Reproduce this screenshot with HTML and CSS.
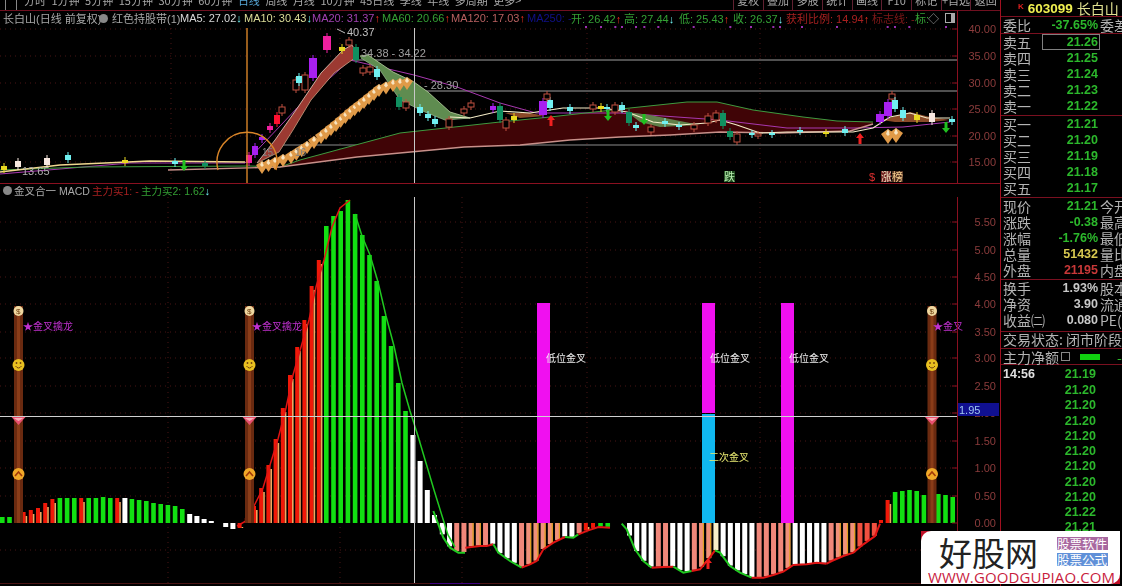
FILE: index.html
```html
<!DOCTYPE html>
<html>
<head>
    <title>长白山 日线</title>
    <link rel="stylesheet" href="styles.css">
</head>
<body>
    <div class="app">
        <div class="chart-col">
            <div class="toolbar">
                <div class="tabs">
                    <span class="tab-icon"></span>
                    <span>分时</span><span>1分钟</span><span>5分钟</span><span>15分钟</span><span>30分钟</span><span>60分钟</span>
                    <span class="active">日线</span><span>周线</span><span>月线</span><span>10分钟</span><span>45日线</span><span>季线</span><span>年线</span><span>多周期</span><span>更多&gt;</span>
                </div>
                <div class="tools">
                    <span>复权</span><span>叠加</span><span>多股</span><span>统计</span><span>画线</span><span>F10</span><span>标记</span><span>+自选</span><span>返回</span>
                </div>
            </div>
            <div class="info-row">
                <span class="c-gray w91">长白山(日线 前复权)</span>
                <span class="dot"></span>
                <span class="c-gray w68">红色持股带(1)</span>
                <span class="c-white w64">MA5: 27.02<i class="c-cyan">↓</i></span>
                <span class="c-yellow w68">MA10: 30.43<i class="c-cyan">↓</i></span>
                <span class="c-purple w70">MA20: 31.37<i class="c-red">↑</i></span>
                <span class="c-green w69">MA60: 20.66<i class="c-red">↑</i></span>
                <span class="c-rose w76">MA120: 17.03<i class="c-red">↑</i></span>
                <span class="c-navy w44">MA250: -</span>
                <span class="c-green w53">开: 26.42<i class="c-red">↑</i></span>
                <span class="c-green w55">高: 27.44<i class="c-cyan">↓</i></span>
                <span class="c-green w54">低: 25.43<i class="c-red">↑</i></span>
                <span class="c-green w53">收: 26.37<i class="c-cyan">↓</i></span>
                <span class="c-darkred w86">获利比例: 14.94<i class="c-red">↑</i></span>
                <span class="c-maroon w43">标志线: -</span>
                <span class="c-green w13">标:</span><span class="c-gray w17">◇</span>
                <span class="mini-box"></span>
            </div>
            <svg id="main-chart" class="main-chart" width="1000" height="155"></svg>
            <div class="sub-row">
                <span class="dot"></span>
                <span class="c-gray w78">金叉合一 MACD</span>
                <span class="c-darkred w49">主力买1: -</span>
                <span class="c-green">主力买2: 1.62<i class="c-cyan">↓</i></span>
            </div>
            <svg id="sub-chart" class="sub-chart" width="1000" height="389"></svg>
        </div>

        <div class="panel">
            <div class="stock-head"><b class="k-tag">K</b><b class="code">603099</b><span class="name">长白山</span></div>
            <div class="sec sec-ratio"><div class="row"><span>委比</span><b class="v up">-37.65%</b><span>委差</span></div></div>
            <div class="sec sec-book">
                <div class="row"><span>卖五</span><b class="v up boxed">21.26</b></div>
                <div class="row"><span>卖四</span><b class="v up">21.25</b></div>
                <div class="row"><span>卖三</span><b class="v up">21.24</b></div>
                <div class="row"><span>卖二</span><b class="v up">21.23</b></div>
                <div class="row"><span>卖一</span><b class="v up">21.22</b></div>
            </div>
            <div class="sec sec-book">
                <div class="row"><span>买一</span><b class="v up">21.21</b></div>
                <div class="row"><span>买二</span><b class="v up">21.20</b></div>
                <div class="row"><span>买三</span><b class="v up">21.19</b></div>
                <div class="row"><span>买四</span><b class="v up">21.18</b></div>
                <div class="row"><span>买五</span><b class="v up">21.17</b></div>
            </div>
            <div class="sec sec-book">
                <div class="row"><span>现价</span><b class="v up">21.21</b><span>今开</span></div>
                <div class="row"><span>涨跌</span><b class="v up">-0.38</b><span>最高</span></div>
                <div class="row"><span>涨幅</span><b class="v up">-1.76%</b><span>最低</span></div>
                <div class="row"><span>总量</span><b class="v gold">51432</b><span>量比</span></div>
                <div class="row"><span>外盘</span><b class="v rust">21195</b><span>内盘</span></div>
            </div>
            <div class="sec sec-stats">
                <div class="row"><span>换手</span><b class="v pale">1.93%</b><span>股本</span></div>
                <div class="row"><span>净资</span><b class="v pale">3.90</b><span>流通</span></div>
                <div class="row"><span>收益㈡</span><b class="v pale">0.080</b><span>PE(静)</span></div>
            </div>
            <div class="sec sec-status">交易状态: 闭市阶段</div>
            <div class="sec sec-flow">
                <span>主力净额</span><span class="flow-icon"></span><span class="flow-bar"></span><b class="flow-end">-</b>
            </div>
            <div class="ticks">
                <div class="tick first"><b class="time">14:56</b><b class="v up">21.19</b></div>
                <div class="tick"><b class="v up">21.20</b></div>
                <div class="tick"><b class="v up">21.20</b></div>
                <div class="tick"><b class="v up">21.20</b></div>
                <div class="tick"><b class="v up">21.20</b></div>
                <div class="tick"><b class="v up">21.20</b></div>
                <div class="tick"><b class="v up">21.20</b></div>
                <div class="tick"><b class="v up">21.20</b></div>
                <div class="tick"><b class="v up">21.20</b></div>
                <div class="tick"><b class="v up">21.22</b></div>
                <div class="tick"><b class="v up">21.21</b></div>
            </div>
        </div>

        <div class="watermark">
            <div class="wm-inner">
                <div class="wm-top">
                    <span class="wm-name">好股网</span>
                    <div class="wm-tags"><span class="tag-soft">股票软件</span><span class="tag-formula">股票公式</span></div>
                </div>
                <div class="wm-url">WWW.GOODGUPIAO.COM</div>
            </div>
        </div>
    </div>
    <script src="script.js"></script>
</body>
</html>
```

FILE: styles.css
```css
html, body { margin: 0; padding: 0; background: #000; }
body { font-family: "Liberation Sans", "Noto Sans CJK SC", sans-serif; overflow: hidden; }
i { font-style: normal; }
svg { display: block; }

.app { position: relative; display: flex; width: 1122px; height: 586px; background: #000; overflow: hidden; }
.chart-col { width: 1000px; flex: none; border-right: 1px solid #a01020; filter: blur(0.35px); }
.main-chart { overflow: visible; }

.toolbar { display: flex; justify-content: space-between; height: 10px; border-bottom: 1px solid #701020; overflow: hidden; font-family: "Noto Sans CJK SC", sans-serif; font-size: 11px; color: #a8a8a8; }
.tabs { display: flex; gap: 5.5px; margin-top: -9px; padding-left: 5px; line-height: 18px; white-space: nowrap; }
.tabs .active { color: #58a8d8; }
.tab-icon { width: 10px; height: 18px; border: 1px solid #888; margin-right: 1.5px; }
.tools { display: flex; width: 267px; margin-top: -9px; line-height: 18px; white-space: nowrap; }
.tools span { flex: 1; text-align: center; border-left: 1px solid #602030; }

.info-row { display: flex; align-items: center; height: 17px; padding: 0 0 3px 3px; box-sizing: border-box; font-size: 11px; white-space: nowrap; overflow: hidden; }
.info-row span, .sub-row span { flex: none; }
.dot { width: 9px; height: 9px; border-radius: 50%; background: #888; margin: 0 4px 0 5px; }
.mini-box { width: 8px; height: 8px; border: 1px solid #aaa; background: linear-gradient(90deg, #000 60%, #aaa 60%); }
.w91 { width: 91px; } .w68 { width: 68px; } .w64 { width: 64px; } .w70 { width: 70px; } .w69 { width: 69px; } .w76 { width: 76px; }
.w44 { width: 44px; } .w53 { width: 53px; } .w55 { width: 55px; } .w54 { width: 54px; } .w86 { width: 86px; } .w43 { width: 43px; }
.w13 { width: 13px; } .w17 { width: 17px; } .w78 { width: 78px; } .w49 { width: 49px; }

.c-gray { color: #a8a8a8; }
.c-white { color: #d8d8d8; }
.c-yellow { color: #dcdc98; }
.c-purple { color: #a040b0; }
.c-green { color: #34a034; }
.c-rose { color: #b86060; }
.c-navy { color: #101088; }
.c-darkred { color: #a82020; }
.c-maroon { color: #801818; }
.c-cyan { color: #70f0f0; }
.c-red { color: #f03020; }

.sub-row { display: flex; align-items: center; height: 14px; border-top: 1px solid #8a1020; font-size: 10.5px; white-space: nowrap; overflow: hidden; box-sizing: border-box; }
.sub-row .dot { margin: 0 2px 0 3px; }

.panel { flex: 1; min-width: 0; overflow: hidden; font-family: "Noto Sans CJK SC", sans-serif; font-size: 14px; color: #b4b4b4; filter: blur(0.3px); }
.stock-head { display: flex; align-items: center; height: 16px; padding-left: 17px; box-sizing: border-box; white-space: nowrap; }
.k-tag { color: #e02020; font-size: 8px; margin: 0 4px 4px 0; font-family: "Liberation Sans", sans-serif; }
.code { color: #f0f050; font: bold 13.5px "Liberation Sans", sans-serif; margin-right: 4px; }
.name { color: #e0e090; }
.sec { border-top: 1px solid #7a1020; box-sizing: border-box; }
.sec-ratio { height: 17px; }
.sec-book { height: 82px; }
.sec-stats { height: 52px; }
.sec-status { height: 17px; line-height: 15px; padding-left: 2px; white-space: nowrap; overflow: hidden; }
.sec-flow { display: flex; align-items: center; height: 16px; padding-left: 2px; white-space: nowrap; }
.row { display: grid; grid-template-columns: 39px 58px 1fr; height: 16px; line-height: 16px; padding-left: 2px; white-space: nowrap; }
.v { font: bold 12.5px/16px "Liberation Sans", sans-serif; text-align: right; padding-right: 2px; }
.up { color: #2cb82c; }
.gold { color: #d8c850; }
.rust { color: #c83838; }
.pale { color: #c8c8c8; }
.boxed { outline: 1px solid #808080; outline-offset: -1px; }

.flow-icon { width: 7px; height: 7px; border: 1px solid #888; margin-left: 2px; }
.flow-bar { width: 20px; height: 6px; background: #10d010; margin-left: 10px; }
.flow-end { color: #2cb82c; margin-left: 17px; font-weight: normal; }

.ticks { border-top: 1px solid #7a1020; padding-top: 2px; }
.tick { display: flex; justify-content: flex-end; height: 15.25px; padding-right: 24px; }
.tick .v { line-height: 15px; }
.tick.first { justify-content: space-between; padding-left: 2px; height: 16px; }
.time { color: #e0e0e0; font: bold 12.5px/15px "Liberation Sans", sans-serif; }

.watermark { position: absolute; left: 921px; top: 531px; width: 199px; height: 53px; background: #c01028; }
.wm-inner { height: 100%; background: #fff; border-radius: 10px 0 10px 0; display: flex; flex-direction: column; }
.wm-top { display: flex; height: 39px; padding: 6px 0 0 18px; box-sizing: border-box; }
.wm-name { width: 118px; margin-top: -1px; font: 400 33px/33px "Noto Sans CJK SC", sans-serif; color: #222; }
.wm-tags { display: flex; flex-direction: column; gap: 3px; font: 12.5px/13px "Noto Sans CJK SC", sans-serif; color: #fff; }
.wm-tags span { width: 51px; height: 13px; white-space: nowrap; }
.tag-soft { background: #a868a0; }
.tag-formula { background: #6090d8; }
.wm-url { padding-left: 7px; font: 15px/14px "Open Sans", sans-serif; color: #c8203c; white-space: nowrap; letter-spacing: 0.1px; }
```

FILE: script.js
```js
// chart data is in page coordinates, each svg shifts it by its own top
function pts(list) { return list.map(p => p.join(',')).join(' '); }
function line(list, color, w) { return `<polyline points="${pts(list)}" fill="none" stroke="${color}" stroke-width="${w || 1}"/>`; }
function area(list, color) { return `<polygon points="${pts(list)}" fill="${color}"/>`; }
function rect(x, y, w, h, color) { return `<rect x="${x}" y="${y}" width="${w}" height="${h}" fill="${color}"/>`; }
function hline(x1, x2, y, color) { return `<line x1="${x1}" x2="${x2}" y1="${y}" y2="${y}" stroke="${color}"/>`; }
function vline(x, y1, y2, color, w) { return `<line x1="${x}" x2="${x}" y1="${y1}" y2="${y2}" stroke="${color}" stroke-width="${w || 1}"/>`; }
function dotted(x1, y1, x2, y2) { return `<line x1="${x1}" x2="${x2}" y1="${y1}" y2="${y2}" stroke="#4a1414" stroke-dasharray="1 4"/>`; }
function label(x, y, s, color, size, extra) { return `<text x="${x}" y="${y}" fill="${color}" font-size="${size || 12}" ${extra || ''}>${s}</text>`; }

function axis(values, top, bottom) {
    let s = vline(957.5, top, bottom, '#8a1020');
    values.forEach(v => {
        s += hline(952, 957, v[1], '#8a1020');
        s += label(996, v[1] + 4, v[0], '#8c3c3c', 11, 'text-anchor="end"');
    });
    return s;
}

function candle(x, t, b, color, hollow, w) {
    w = w || 6;
    let s = vline(x, t - 3, b + 3, color);
    if (hollow) return s + `<rect x="${x - w / 2}" y="${t}" width="${w}" height="${b - t}" fill="#000" stroke="${color}"/>`;
    return s + rect(x - w / 2, t, w, b - t, color);
}

function arrow(x, y, color, down) {
    const d = down ? 1 : -1;
    return `<polygon points="${x - 1.5},${y - 6 * d} ${x + 1.5},${y - 6 * d} ${x + 1.5},${y} ${x + 4},${y} ${x},${y + 5 * d} ${x - 4},${y} ${x - 1.5},${y}" fill="${color}"/>`;
}

function gem(x, y, r) {
    return `<polygon points="${x - r},${y - 2} ${x},${y - r} ${x + r},${y - 2} ${x},${y + r + 1}" fill="#e09a48"/><polygon points="${x - 2},${y - 2} ${x},${y - r} ${x + 2},${y - 2} ${x},${y}" fill="#f8e4c0"/>`;
}

function along(list, step) {
    const out = [];
    for (let i = 0; i < list.length - 1; i++) {
        const [x1, y1] = list[i], [x2, y2] = list[i + 1];
        const n = Math.max(1, Math.round(Math.hypot(x2 - x1, y2 - y1) / step));
        for (let k = 0; k < n; k++) out.push([x1 + (x2 - x1) * k / n, y1 + (y2 - y1) * k / n]);
    }
    out.push(list[list.length - 1]);
    return out;
}

const TEAL = '#109060', CYAN = '#70f0f0', HOLLOW = '#c05040', PURPLE = '#a820f0', MAG = '#f020a0', RED = '#ff1030', YEL = '#e8d820', WHT = '#f8e8e0';

function drawMain() {
    const green = [[280, 167], [300, 160], [400, 133], [500, 122], [550, 117], [630, 108], [687, 102], [717, 102], [753, 110], [803, 117], [837, 121], [873, 122]];
    const pink = [[280, 167], [357, 157], [464, 147], [520, 145], [570, 140], [620, 137], [670, 135], [720, 132], [780, 133], [850, 131], [873, 124]];
    const redUp = [[257, 163], [275, 140], [296, 110], [321, 73], [343, 50], [352, 45], [358, 55]];
    const redLow = [[257, 163], [279, 152], [293, 130], [311, 100], [334, 73], [352, 60], [358, 55]];
    const grnUp = [[360, 56], [368, 55], [393, 72], [414, 82], [428, 92], [450, 112], [470, 118]];
    const grnLow = [[361, 58], [380, 70], [400, 100], [425, 112], [445, 120], [470, 118]];
    const price = [[450, 117], [470, 118], [500, 111], [530, 113], [563, 108], [603, 108], [627, 112], [653, 122], [680, 125], [707, 123], [720, 120], [737, 125], [760, 133], [787, 132], [853, 132], [873, 128], [890, 117], [910, 113], [927, 118], [950, 118]];
    const purple = [[0, 174], [60, 169], [130, 163], [245, 163], [300, 105], [350, 60], [414, 75], [457, 87], [500, 103], [536, 113], [620, 113], [720, 120], [787, 128], [853, 128], [903, 127], [950, 122]];

    let s = '';
    [29, 56, 83, 109, 136, 162].forEach(y => { s += dotted(0, y, 957, y); });
    [171, 340, 587, 760].forEach(x => { s += dotted(x, 28, x, 183); });
    s += hline(350, 957, 60, '#a0a0a0') + hline(410, 957, 91, '#a0a0a0') + hline(282, 957, 145, '#8c8c8c');
    // wide dark ribbon
    s += area(green.concat(pink.slice().reverse()), '#400406');
    s += line(purple, '#a838b0');
    s += line([[0, 170], [86, 167], [250, 166], [280, 167]].concat(green), '#3f9a3f');
    s += line([[168, 170], [280, 167]].concat(pink), '#c8908a', 1.4);
    // ribbons
    s += area(redUp.concat(redLow.slice().reverse()), '#9c3a32');
    s += line(redUp, '#e8d0c0', 0.8) + line(redLow, '#c8a080', 0.8);
    s += area(grnUp.concat(grnLow.slice().reverse()), '#5f8c50');
    s += line(grnUp, '#b8d0a0', 0.8) + line(grnLow, '#90b088', 0.8);
    s += area([[627, 112], [650, 115], [690, 123], [700, 125], [660, 127], [640, 122]], '#60804a');
    s += area([[882, 120], [910, 112], [930, 117], [950, 120], [930, 122], [895, 122]], '#8a4a28');
    s += area([[505, 113], [530, 113], [545, 116], [520, 118]], '#8a4a28');
    s += line(price, '#f4ecc8', 1.2);
    s += line([[0, 172], [60, 165], [150, 161], [245, 162]], '#f0d890', 1.6);

    // candles
    const candles = [
        [4, 166, 170, YEL], [18, 161, 167, WHT], [47, 158, 165, WHT], [68, 155, 160, CYAN], [125, 160, 163, YEL], [175, 161, 164, CYAN], [205, 163, 166, TEAL],
        [249, 155, 163, MAG], [255, 146, 155, PURPLE], [262, 137, 140, PURPLE], [270, 126, 130, MAG], [277, 115, 124, RED],
        [282, 107, 113, HOLLOW, 1], [296, 80, 90, HOLLOW, 1], [305, 75, 90, HOLLOW, 1], [299, 76, 83, CYAN],
        [313, 58, 78, PURPLE, 0, 8], [327, 36, 50, MAG, 0, 8], [349, 40, 45, HOLLOW, 1], [342, 47, 51, YEL], [356, 47, 60, TEAL],
        [363, 68, 73, HOLLOW, 1], [370, 67, 72, HOLLOW, 1], [377, 69, 77, CYAN], [399, 97, 107, TEAL], [406, 102, 108, HOLLOW, 1],
        [420, 107, 113, CYAN], [428, 114, 118, CYAN], [435, 119, 124, CYAN], [449, 119, 127, HOLLOW, 1], [464, 109, 113, HOLLOW, 1], [471, 103, 107, HOLLOW, 1],
        [493, 106, 110, PURPLE], [500, 106, 120, TEAL], [506, 120, 128, HOLLOW, 1], [514, 116, 120, YEL],
        [543, 101, 115, PURPLE, 0, 8], [550, 100, 108, CYAN], [547, 94, 99, HOLLOW, 1],
        [570, 107, 111, CYAN], [593, 105, 109, HOLLOW, 1], [601, 106, 109, YEL], [607, 107, 109, CYAN], [615, 105, 112, HOLLOW, 1], [622, 105, 110, CYAN],
        [629, 112, 123, TEAL], [636, 125, 128, CYAN], [651, 127, 132, HOLLOW, 1], [665, 121, 124, CYAN], [679, 125, 127, CYAN], [694, 125, 129, HOLLOW, 1],
        [708, 116, 123, HOLLOW, 1], [716, 113, 120, HOLLOW, 1], [723, 113, 126, TEAL], [730, 131, 137, TEAL], [737, 134, 142, HOLLOW, 1],
        [752, 133, 135, CYAN], [758, 134, 136, HOLLOW, 1], [772, 133, 135, CYAN], [800, 130, 132, CYAN], [826, 132, 134, YEL], [845, 129, 133, CYAN],
        [880, 114, 122, PURPLE, 0, 8], [888, 102, 116, PURPLE, 0, 8], [892, 94, 99, HOLLOW, 1], [895, 100, 109, CYAN],
        [903, 110, 118, CYAN], [917, 115, 120, YEL], [932, 113, 122, WHT], [952, 119, 122, CYAN]
    ];
    candles.forEach(c => { s += candle(c[0], c[1], c[2], c[3], c[4], c[5]); });

    // top dots
    [195, 240, 283, 303, 345, 370, 412, 518, 628, 690, 757, 777, 843, 948, 1100, 1122, 1165, 1275].forEach(X => { s += rect(520 + X / 3, 26, 2, 2, '#9a30b0'); });

    // gem chain
    along([[262, 167], [275, 163], [291, 157], [307, 147], [321, 137], [336, 125], [350, 113], [364, 102], [379, 90], [393, 85], [407, 83]], 7).forEach(p => { s += gem(p[0], p[1], 6); });
    s += gem(888, 136, 7) + gem(896, 135, 7);

    // arrows
    s += arrow(184, 166, '#20c020', 1) + arrow(608, 116, '#20c020', 1) + arrow(644, 120, '#20c020', 1) + arrow(946, 128, '#20c020', 1);
    s += arrow(551, 120, '#f02020') + arrow(860, 138, '#f02020');

    // circle, cross line and marker line
    s += `<path d="M218,170 A30,30 0 1 1 276,170" fill="none" stroke="#d98528" stroke-width="1.4"/>`;
    s += vline(247, 28, 183, '#d98528', 1.4);
    s += vline(414.5, 28, 183, '#c8c8c8');

    // price notes
    s += line([[337, 29], [345, 33]], '#c0c0c0');
    s += label(347, 36, '40.37', '#c0c0c0', 11) + label(361, 57, '34.38 - 34.22', '#a0a0a0', 11);
    s += label(424, 89, '- 28.30', '#a0a0a0', 11) + label(262, 156, '15', '#808080', 10) + label(295, 156, '16', '#808080', 10) + label(22, 175, '13.65', '#b0b0b0', 11);

    // tags on the chart foot
    s += rect(724, 171, 11, 11, '#1e4a1e') + label(724, 181, '跌', '#b8f0b0', 11);
    s += label(869, 181, '$', '#e03030', 11);
    s += rect(881, 171, 10, 11, '#702020') + label(881, 181, '涨', '#f0e0c0', 11);
    s += rect(892, 171, 11, 11, '#503020') + label(892, 181, '榜', '#f8d090', 11);

    s += axis([['40.00', 29], ['35.00', 56], ['30.00', 83], ['25.00', 109], ['20.00', 136], ['15.00', 162]], 11, 183);
    document.getElementById('main-chart').innerHTML = `<g transform="translate(0,-28)">${s}</g>`;
}

function bar(x, h, code) {
    const base = 523, w = code === 'r' ? 4 : (code === 'g' ? 4.6 : 5);
    const y = h >= 0 ? base - h : base, ht = Math.abs(h);
    const fill = { r: '#f01808', g: '#12e012', w: '#ffffff', s: '#f0877a', o: '#f0907a', c: '#f8f0c8', t: '#f05040' }[code];
    let s = rect(x, y, w, ht, fill);
    if (code === 'r' && ht > 4) s += rect(x + w, y + 4, 1.6, ht - 4, '#f0a860');
    if (code === 'o') s += rect(x + w - 1.2, y, 1.2, ht, '#e0a020');
    return s;
}

function valueAt(list, X) {
    for (let i = 0; i < list.length - 1; i++) {
        if (X >= list[i][0] && X <= list[i + 1][0]) {
            const t = (X - list[i][0]) / (list[i + 1][0] - list[i][0] || 1);
            return list[i][1] + (list[i + 1][1] - list[i][1]) * t;
        }
    }
    return list[list.length - 1][1];
}

function stick(x) {
    let s = rect(x - 4.5, 306, 9, 217, '#6a2a10') + rect(x - 1.5, 306, 3, 217, '#8a3c18');
    s += `<circle cx="${x}" cy="311" r="5" fill="#f0d8a0"/>` + label(x - 2.5, 314, '$', '#704010', 8);
    s += `<circle cx="${x}" cy="365" r="6" fill="#e8c020"/><circle cx="${x - 2}" cy="363" r="0.9" fill="#704010"/><circle cx="${x + 2}" cy="363" r="0.9" fill="#704010"/><path d="M${x - 3},366 Q${x},370 ${x + 3},366" stroke="#704010" fill="none"/>`;
    s += `<polygon points="${x - 7},417 ${x + 7},417 ${x},425" fill="#e85070"/><polygon points="${x - 5},418 ${x + 5},418 ${x},421" fill="#f8b0b8"/>`;
    s += `<circle cx="${x}" cy="474" r="6" fill="#f0a828"/><path d="M${x - 3.5},476 L${x},472 L${x + 3.5},476" stroke="#a03808" stroke-width="1.6" fill="none"/>`;
    return s;
}

function drawSub() {
    let s = '';
    [222, 250, 277, 304, 332, 358, 386, 413, 441, 468, 496, 550].forEach(y => { s += dotted(0, y, 957, y); });
    [168, 340, 462, 587, 760].forEach(x => { s += dotted(x, 197, x, 583); });

    // left hump, n counts from x = 252 in 7.2px steps
    const step = 7.2, at = n => 252 + step * n;
    const left = [[6, 'g'], [6, 'g'], [10, 'r'], [11, 'r'], [13, 'r'], [15, 'r'], [20, 'r'], [24, 'r'],
        [25, 'g'], [25, 'g'], [25, 'g'], [25, 'r'], [25, 'g'], [25, 'g'], [26, 'g'], [25, 'g'], [25, 'r'], [25, 'w'], [24, 'g'], [23, 'g'], [22, 'g'], [20, 'g'], [19, 'g'], [18, 'g'], [17, 'g'], [14, 'g'],
        [9, 'w'], [7, 'w'], [4, 'w'], [2, 'w'], [0, 'w'], [-4, 'w'], [-6, 'w'], [-5, 'r'], [5, 'r']];
    left.forEach((b, i) => { s += bar(at(i - 35), b[0], b[1]); });

    const hump = [17, 35, 58, 84, 115, 148, 176, 203, 237, 263, 297, 307, 312, 323, 309, 288, 268, 242, 207, 177, 140, 112, 88, 62, 33, 8];
    hump.forEach((h, i) => { s += bar(at(i), h, i < 10 ? 'r' : (i < 22 ? 'g' : 'w')); });

    // below zero, profile read off in 3x units
    const profile = [[0, 68], [10, 30], [40, 110], [60, 140], [85, 155], [105, 155], [106, 140], [150, 135], [170, 135], [190, 130], [205, 155], [240, 180], [275, 200], [300, 190], [320, 180], [340, 145], [370, 125], [405, 108], [430, 110], [445, 100], [475, 88], [505, 78], [540, 80], [555, 68], [575, 68], [590, 85], [615, 145], [640, 180], [665, 200], [700, 198], [730, 197], [760, 215], [785, 210], [810, 205], [835, 175], [855, 148], [870, 155], [900, 195], [930, 215], [965, 230], [1000, 230], [1030, 222], [1060, 212], [1090, 192], [1130, 190], [1160, 185], [1190, 188], [1205, 180], [1240, 165], [1270, 155], [1300, 130], [1335, 105], [1350, 68]];
    const codes = 'wwssooswwwwsoooooww' + 'srrgg--' + 'wwwwsswwwsoocwwwwwssssowwwwwsooottt';
    codes.split('').forEach((c, i) => {
        if (c === '-') return;
        const X = 37 + 21.6 * i;
        const h = (valueAt(profile, X) - 68) / 3;
        s += bar(430 + X / 3 - 2.5, -h, c);
    });
    const prof = profile.map(p => [430 + p[0] / 3, 500 + p[1] / 3 + 1]);
    const cut = (a, b) => prof.filter(p => p[0] >= 430 + a / 3 && p[0] <= 430 + b / 3);
    [[10, 105, 'g'], [106, 190, 'r'], [190, 280, 'g'], [275, 405, 'r'], [405, 445, 'g'], [445, 540, 'r'], [575, 670, 'g'], [665, 730, 'r'], [730, 785, 'g'], [785, 855, 'r'], [855, 965, 'g'], [965, 1190, 'r'], [1190, 1350, 'r']].forEach(seg => {
        s += line(cut(seg[0], seg[1]), seg[2] === 'g' ? '#20c820' : '#e01414', 2);
    });
    s += bar(879, 3, 'r') + bar(885.6, 23, 'r');
    [31, 32, 33, 32, 28, 30, 29, 28, 26].forEach((h, i) => { s += bar(at(89 + i), h, 'g'); });

    // hump outline
    const upper = [[237, 526], [246, 521], [254, 506], [263, 488], [270, 465], [278, 439], [286, 408], [293, 375], [301, 347], [309, 320], [316, 287], [324, 260], [332, 227], [340, 208], [350, 200]];
    const down = [[355, 214], [362, 236], [370, 255], [378, 282], [386, 316], [394, 346], [402, 383], [410, 411], [418, 436], [426, 463], [434, 490], [443, 519], [448, 535], [455, 547]];
    s += line(upper, '#e01414', 1.5) + line(down, '#20c820', 1.5);

    // gold cross columns
    s += rect(537, 303, 13, 220, '#f010f0') + rect(702, 303, 13, 110, '#f010f0') + rect(702, 414, 13, 109, '#10b8f0') + rect(781, 303, 13, 220, '#f010f0');
    s += label(546, 362, '低位金叉', '#f0f0f0', 10) + label(710, 362, '低位金叉', '#f0f0f0', 10) + label(789, 362, '低位金叉', '#f0f0f0', 10) + label(709, 461, '二次金叉', '#e8e870', 10);

    // sticks with signal icons
    [18.5, 249.5, 932].forEach(x => { s += stick(x); });
    s += label(23, 330, '★金叉擒龙', '#c030d0', 10) + label(252, 330, '★金叉擒龙', '#c030d0', 10) + label(933, 330, '★金叉', '#c030d0', 10);

    s += hline(0, 957, 416.5, '#d0d0d0');
    s += vline(414.5, 197, 583, '#c8c8c8');
    s += arrow(708, 563, '#f02020');
    s += hline(0, 957, 583.5, '#4a1414') + hline(430, 480, 583.5, '#400080');

    s += axis([['5.50', 222], ['5.00', 250], ['4.50', 277], ['4.00', 304], ['3.50', 332], ['3.00', 358], ['2.50', 386], ['2.00', 413], ['1.50', 441], ['1.00', 468], ['0.50', 496], ['0.00', 523]], 183, 584);
    s += rect(958, 403, 41, 13, '#101090') + label(959, 414, '1.95', '#a0c8f0', 11);
    document.getElementById('sub-chart').innerHTML = `<g transform="translate(0,-197)">${s}</g>`;
}

drawMain();
drawSub();
```
